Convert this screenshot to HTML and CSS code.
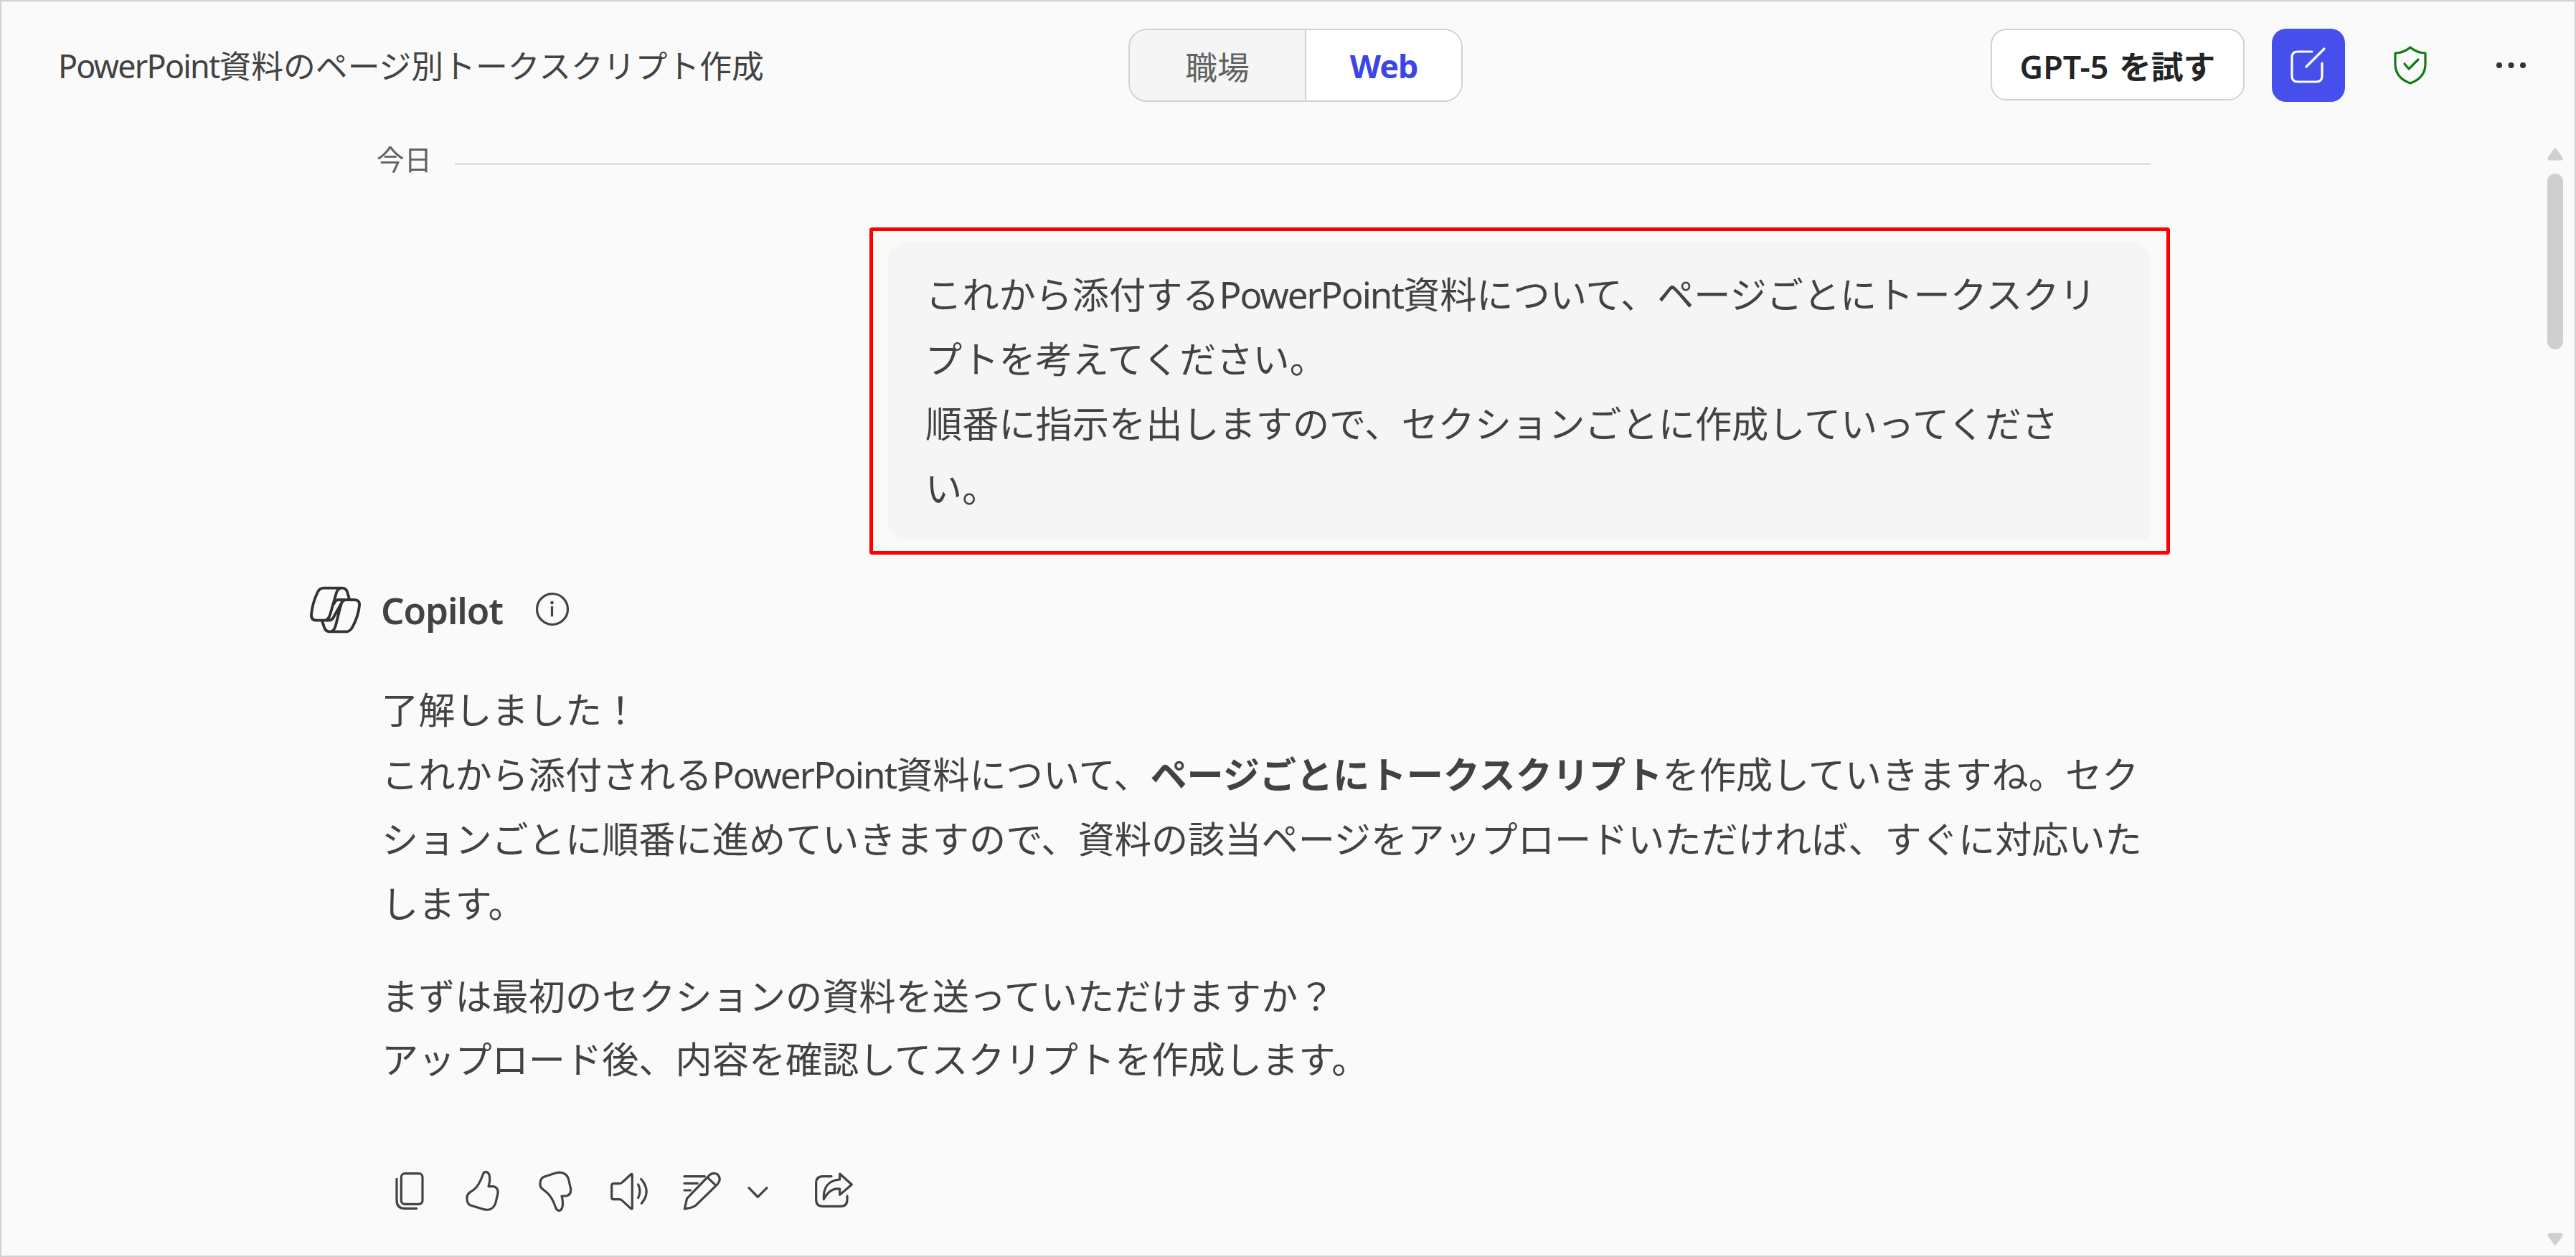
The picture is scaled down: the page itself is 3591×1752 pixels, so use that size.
FILE: index.html
```html
<!DOCTYPE html>
<html lang="ja">
<head>
<meta charset="utf-8">
<title>Copilot</title>
<link rel="stylesheet" href="styles.css">
</head>
<body>
<div class="window">
  <header class="header">
    <h1 class="title"><span class="latin">PowerPoint</span>資料のページ別トークスクリプト作成</h1>
    <div class="toggle">
      <button class="toggle-item">職場</button>
      <button class="toggle-item selected">Web</button>
    </div>
    <div class="tools">
      <button class="try">GPT-5 を試す</button>
      <button class="compose" aria-label="新しいチャット">
        <svg class="compose-icon" viewBox="0 0 54 54"><path d="M32 8H12Q4 8 4 16V42Q4 50 12 50H38Q46 50 46 42V24M24 29L49 4"/></svg>
      </button>
      <svg class="shield" viewBox="0 0 70 60"><path d="M35 5C41 10 48 13 56 13V28C56 41 49 50 35 55C21 50 14 41 14 28V13C22 13 29 10 35 5ZM27 28L33 35L46 22"/></svg>
      <svg class="more" viewBox="0 0 60 60"><circle cx="14" cy="30" r="4"/><circle cx="30.500" cy="30" r="4"/><circle cx="47" cy="30" r="4"/></svg>
    </div>
  </header>
  <div class="body">
    <main class="thread">
      <div class="date"><span>今日</span><i class="rule"></i></div>
      <section class="highlight">
        <div class="bubble">これから添付する<span class="latin">PowerPoint</span>資料について、ページごとにトークスクリ<br>プトを考えてください。<br>順番に指示を出しますので、セクションごとに作成していってくださ<br>い。</div>
      </section>
      <div class="author">
        <svg class="logo" viewBox="90 105 225 210"><path d="M187 119H153Q137 119 129 135C114 165 105 200 102 229Q100 254 125 254H173Q191 254 197 237L228 182Q234 168 247 168H279Q306 168 303 192C300 222 287 259 273 284Q263 301 249 301H177Q163 301 157 286L147 256M187 119H232Q246 119 252 134L261 165M232 119Q213 119 207 138L182 225Q175 250 160 254M240 168H216Q202 168 197 184M232 170C220 205 211 250 203 278Q196 301 179 301"/></svg>
        <strong class="name">Copilot</strong>
        <svg class="info" viewBox="0 0 50 50"><circle cx="25" cy="25" r="21.500"/><path d="M24.500 22V34"/><circle class="dot" cx="24.500" cy="16" r="2.300"/></svg>
      </div>
      <article class="reply">
        <p class="para">了解しました！<br>これから添付される<span class="latin">PowerPoint</span>資料について、<b>ページごとにトークスクリプト</b>を作成していきますね。セク<br>ションごとに順番に進めていきますので、資料の該当ページをアップロードいただければ、すぐに対応いた<br>します。</p>
        <p class="para second">まずは最初のセクションの資料を送っていただけますか？<br>アップロード後、内容を確認してスクリプトを作成します。</p>
      </article>
      <div class="actions">
        <svg class="icon" viewBox="60 90 180 180"><rect x="118" y="107" width="89" height="128" rx="15"/><path d="M99 130V218Q99 253 133 253H182"/></svg>
        <svg class="icon" viewBox="366 90 180 180"><path d="M472 100Q463 100 460 110C450 138 435 165 421 175L402 188Q393 195 393 208V213Q394 235 408 240L460 256C485 264 507 253 513 228L522 190Q524 162 500 161H483Q490 141 488 123Q486 101 472 100Z"/></svg>
        <svg class="icon" viewBox="672 90 180 180"><path d="M778 262Q768 262 764 250C755 222 738 195 724 184L708 171Q699 164 699 152V147Q700 127 715 121L763 105C790 97 812 108 818 132L827 172Q829 198 806 201H789Q795 222 793 240Q791 261 778 262Z"/></svg>
        <svg class="icon" viewBox="78 90 180 180"><path d="M184 113V251Q184 258 178 253L142 220Q137 215 130 215H107Q98 215 98 206V158Q98 149 107 149H130Q137 149 142 144L178 111Q184 106 184 113ZM209 153Q223 181 209 209M221 130Q265 181 223 232"/></svg>
        <svg class="icon" viewBox="384 90 180 180"><path d="M402 119H487M402 148H457M402 177H428M403 255L413 211L502 119Q519 99 540 110Q559 130 541 151L449 241Q441 247 432 249ZM500 125L534 157"/></svg>
        <svg class="icon chevron" viewBox="618 90 180 180"><path d="M672 167L709 205L747 167"/></svg>
        <svg class="icon share" viewBox="936 90 180 180"><path d="M1017 119H981Q953 119 953 147V216Q953 244 981 244H1055Q1083 244 1083 216V201M1052 108L1102 153L1052 196V171C1022 167 1002 181 985 215C982 163 1006 135 1052 132Z"/></svg>
      </div>
    </main>
    <aside class="scrollbar">
      <svg class="arrow" viewBox="0 0 22 18"><path d="M9 2Q11-1 13 2L21 13Q23 17 19 17.500H3Q-1 17 1 13Z"/></svg>
      <div class="thumb"></div>
      <svg class="arrow down" viewBox="0 0 22 18"><path d="M9 16Q11 19 13 16L21 5Q23 1 19 .5H3Q-1 1 1 5Z"/></svg>
    </aside>
  </div>
</div>
</body>
</html>
```
FILE: styles.css
```css
* { box-sizing: border-box; }

body {
  margin: 0;
  color: #424242;
  font-family: "Noto Sans", "Noto Sans CJK JP", sans-serif;
}

button { font: inherit; padding: 0; }
svg { display: block; flex: none; fill: none; stroke-linejoin: round; stroke-linecap: round; }

.window {
  display: flex;
  flex-direction: column;
  width: 3591px;
  height: 1752px;
  overflow: hidden;
  border: 2px solid #d1d1d1;
  background: #fafafa;
}

.header {
  display: grid;
  grid-template-columns: 1571px 466px 1fr;
  height: 140px;
  padding: 38px 59px 0 0;
  font-size: 44.8px;
}

.title {
  margin: 0;
  padding-left: 79px;
  font-size: inherit;
  font-weight: 400;
  line-height: 104px;
  white-space: nowrap;
}

.latin { letter-spacing: -0.039em; }

.toggle {
  display: flex;
  height: 102px;
  overflow: hidden;
  border: 2px solid #d1d1d1;
  border-radius: 26px;
}

.toggle-item {
  width: 246px;
  border: 0;
  border-right: 2px solid #d1d1d1;
  background: #f5f5f5;
  color: #616161;
}

.toggle-item.selected {
  flex: 1;
  border: 0;
  background: #fff;
  color: #3c45e5;
  font-weight: 700;
  letter-spacing: -1px;
}

.tools { display: flex; justify-content: flex-end; }

.try {
  width: 354px;
  height: 100px;
  border: 2px solid #d1d1d1;
  border-radius: 22px;
  background: #fff;
  color: #242424;
  font-weight: 600;
  white-space: nowrap;
  word-spacing: 3px;
}

.compose {
  display: grid;
  place-items: center;
  width: 102px;
  height: 102px;
  margin-left: 38px;
  border: 0;
  border-radius: 20px;
  background: #464feb;
}

.compose-icon { width: 54px; height: 54px; stroke: #fff; stroke-width: 3.2; }
.shield { width: 70px; height: 60px; margin: 21px 0 0 56px; stroke: #107c10; stroke-width: 3.2; }
.more { width: 60px; height: 60px; margin: 21px 0 0 75px; fill: #333; }

.body { display: flex; flex: 1; justify-content: space-between; }

.thread {
  display: flex;
  flex-direction: column;
  width: 2595px;
  margin-left: 428px;
  padding-top: 55px;
}

.date {
  display: flex;
  align-items: center;
  gap: 32px;
  height: 50px;
  padding: 0 27px 0 95px;
  color: #616161;
  font-size: 38.4px;
  line-height: 50px;
}

.rule { flex: 1; height: 3px; margin-top: 12px; background: #e0e0e0; }

.highlight {
  align-self: flex-end;
  width: 1813px;
  height: 456px;
  margin-top: 70px;
  padding: 15px 22px 15px 20px;
  border: 5px solid #f00;
  border-radius: 4px;
}

.bubble {
  height: 416px;
  padding: 28px 0 0 53px;
  border-radius: 28px 28px 8px 28px;
  background: #f5f5f5;
  font-size: 51.2px;
  line-height: 90px;
  white-space: nowrap;
}

.author { display: flex; align-items: center; height: 70px; margin-top: 42px; }
.logo { width: 75px; height: 70px; stroke: #333; stroke-width: 11.5; }

.name {
  width: 189px;
  margin-left: 26px;
  font-size: 51.2px;
  font-weight: 600;
  line-height: 70px;
  letter-spacing: -1.1px;
}

.info { width: 50px; height: 50px; margin: -2px 0 0 25px; stroke: #424242; stroke-width: 3.2; }
.info .dot { fill: #424242; stroke: none; }

.reply { margin: 59px 0 0 102px; font-size: 51.2px; white-space: nowrap; }
.para { margin: 0; line-height: 90px; }
.second { margin-top: 40px; line-height: 88px; }

.actions { display: flex; gap: 42px; margin: 110px 0 0 110px; }
.icon { width: 60px; height: 60px; stroke: #424242; stroke-width: 9.5; }
.chevron { margin-left: -24px; }
.share { margin-left: 4px; }

.scrollbar {
  display: flex;
  flex-direction: column;
  width: 22px;
  margin: 64px 16px 14px 0;
}

.arrow { width: 22px; height: 18px; fill: #cfcfcf; }
.thumb { height: 245px; margin-top: 18px; border-radius: 11px; background: #cfcfcf; }
.down { margin-top: auto; }
```
